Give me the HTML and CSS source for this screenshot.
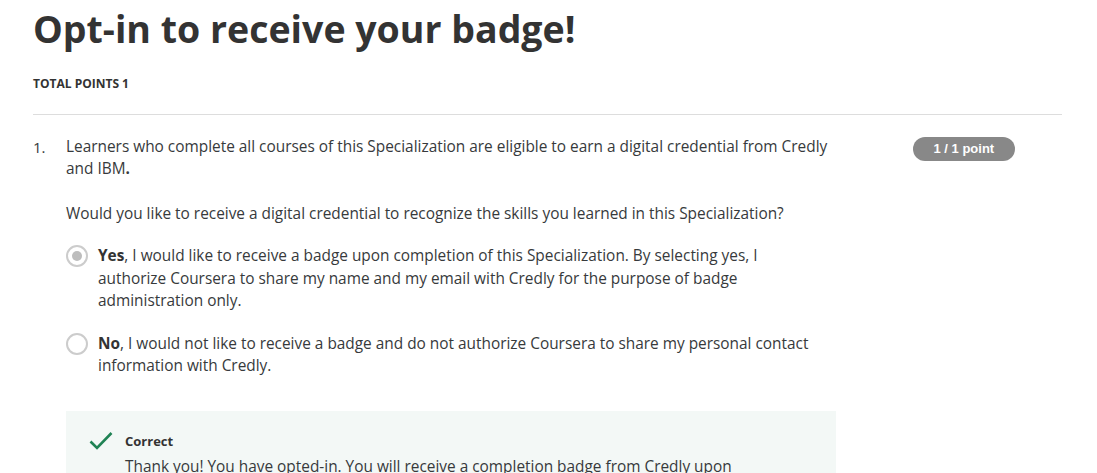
FILE: index.html
```html
<!DOCTYPE html>
<html>
<head>
<meta charset="utf-8">
<link rel="stylesheet" href="styles.css">
</head>
<body>
<div class="page">
  <h1 class="title">Opt-in to receive your badge!</h1>
  <div class="total">TOTAL POINTS 1</div>
  <hr class="divider">
  <div class="question">
    <div class="qnum">1.</div>
    <div class="qbody">
      <p class="qtext">Learners who complete all courses of this Specialization are eligible to earn a digital credential from Credly and IBM<b>.</b></p>
      <p class="qtext qask">Would you like to receive a digital credential to recognize the skills you learned in this Specialization?</p>
      <div class="options">
        <div class="option">
          <span class="radio checked"><span class="dot"></span></span>
          <div class="otext"><b>Yes</b>, I would like to receive a badge upon completion of this Specialization. By selecting yes, I authorize Coursera to share my name and my email with Credly for the purpose of badge administration only.</div>
        </div>
        <div class="option">
          <span class="radio"></span>
          <div class="otext"><b>No</b>, I would not like to receive a badge and do not authorize Coursera to share my personal contact information with Credly.</div>
        </div>
      </div>
      <div class="feedback">
        <div class="fhead">
          <svg class="check" width="24" height="20" viewBox="0 0 24 20"><path d="M1.5 10.5 L8 17 L22.5 2" fill="none" stroke="#1f8354" stroke-width="2.6"/></svg>
          <span class="flabel">Correct</span>
        </div>
        <div class="ftext">Thank you! You have opted-in. You will receive a completion badge from Credly upon completion of this Specialization.</div>
      </div>
    </div>
    <div class="score"><span class="pill">1 / 1 point</span></div>
  </div>
</div>
</body>
</html>
```
FILE: styles.css
```css
html, body { margin: 0; padding: 0; background: #fff; }
body { font-family: "Open Sans", "Noto Sans", sans-serif; color: #373a3c; }
.page { padding: 0 35px 0 33px; }
.title {
  margin: 0;
  padding-top: 6px;
  font-size: 37.5px;
  line-height: 46px;
  font-weight: 700;
  color: #333;
}
.total {
  margin-top: 24px;
  font-size: 12px;
  font-weight: 700;
  line-height: 16px;
  color: #333;
}
.divider {
  margin: 22px 0 0 0;
  border: 0;
  border-top: 1px solid #ddd;
  height: 0;
}
.question {
  display: flex;
  padding-top: 21px;
}
.qnum { width: 33px; font-size: 15px; line-height: 22px; }
.qbody { width: 770px; }
.qtext { margin: 0; font-size: 15.4px; line-height: 22px; }
.qask { margin-top: 23px; }
.options { margin-top: 20px; display: flex; flex-direction: column; gap: 20px; }
.option { display: flex; align-items: flex-start; }
.radio {
  flex: none;
  width: 18px; height: 18px;
  border: 2px solid #ccc;
  border-radius: 50%;
  margin-top: 0px;
  margin-right: 10px;
  display: flex; align-items: center; justify-content: center;
  box-sizing: content-box;
}
.radio .dot { width: 10px; height: 10px; border-radius: 50%; background: #bdbdbd; }
.otext { font-size: 15.4px; line-height: 22.5px; width: 725px; }
.otext b { color: #333; }
.feedback {
  margin-top: 33px;
  background: #f3f8f6;
  padding: 20px 24px 20px 23px;
}
.fhead { display: flex; align-items: center; gap: 12px; }
.check { display: block; }
.flabel { font-size: 13px; font-weight: 700; color: #333; }
.ftext { margin-top: 5px; padding-left: 36px; font-size: 15.4px; line-height: 22px; max-width: 650px; }
.score { flex: 1; padding-left: 77px; padding-top: 0; }
.pill {
  display: inline-block;
  background: #888;
  color: #fff;
  font-family: "Liberation Sans", Arial, sans-serif;
  font-weight: 700;
  font-size: 13px;
  line-height: 24px;
  padding: 0 20.5px;
  border-radius: 12px;
}
```
